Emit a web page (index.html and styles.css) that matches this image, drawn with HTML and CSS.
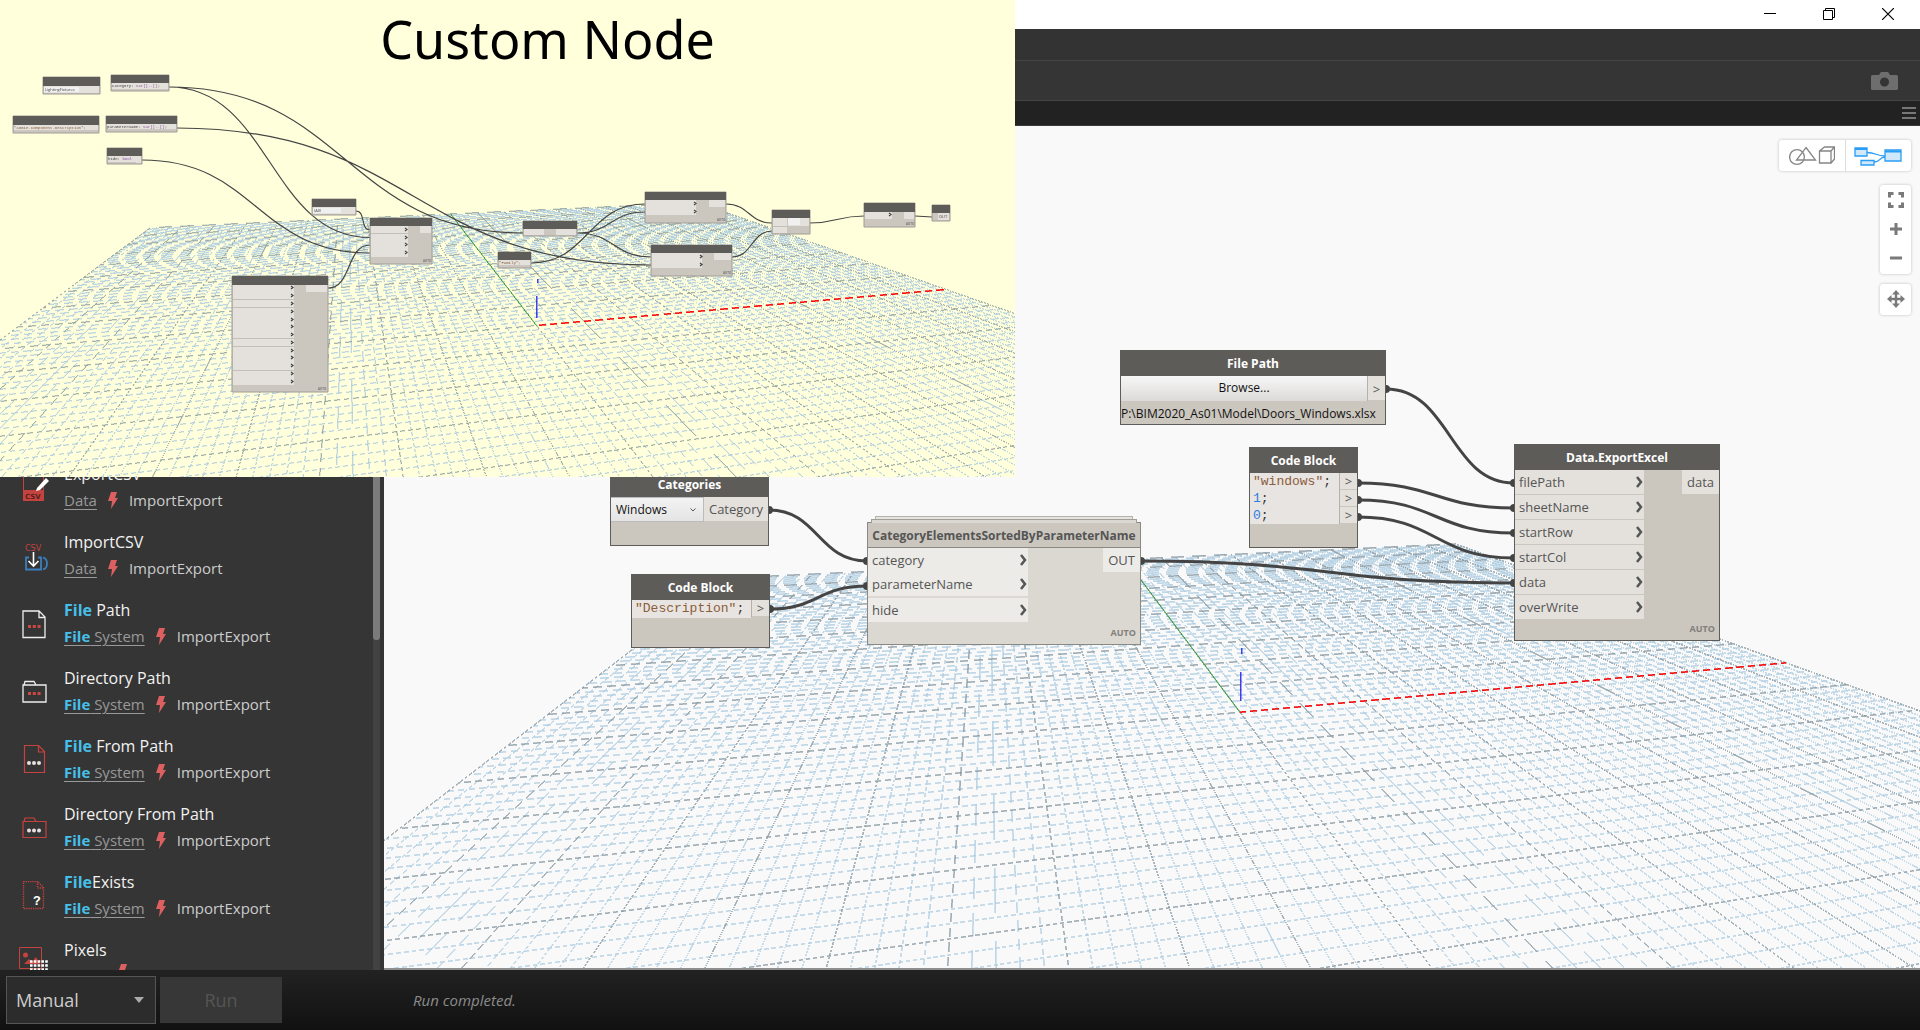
FILE: index.html
```html
<!DOCTYPE html>
<html lang="en">
<head>
<meta charset="utf-8">
<title>Dynamo</title>
<link rel="stylesheet" href="styles.css">
</head>
<body>
<div class="app">
  <header class="titlebar">
    <button class="win-btn" aria-label="Minimize"><svg width="12" height="12"><path d="M0 5.500h12" stroke="#000"/></svg></button>
    <button class="win-btn" aria-label="Restore"><svg width="12" height="12" fill="none" stroke="#000"><path d="M.5 2.500h9v9h-9zM2.500 2.500v-2h9v9h-2"/></svg></button>
    <button class="win-btn" aria-label="Close"><svg width="12" height="12"><path d="M0 0l12 12M12 0L0 12" stroke="#000" stroke-width="1.200"/></svg></button>
  </header>
  <div class="menubar"></div>
  <div class="toolbar">
    <button class="plain" aria-label="Export image"><svg width="27" height="18" viewBox="0 0 27 18"><path fill="#6e6e6e" fill-rule="evenodd" d="M1.500 3H8l1.500-2.500Q9.800 0 10.500 0h6q.7 0 1 .5L19 3h6.500Q27 3 27 4.500v12q0 1.500-1.500 1.500h-24Q0 18 0 16.500v-12Q0 3 1.500 3zM13.500 5.500a4.500 4.500 0 1 0 .01 0z"/></svg></button>
  </div>

  <div class="main">
    <aside class="sidebar">
      <ul class="results">
        <li class="result">
          <svg class="icon" width="32" height="32" viewBox="0 0 32 32" overflow="visible"><path d="M4.500 20V-3h14l6 6v17" fill="none" stroke="#c5433f"/><path d="M18.500-3v6h6" fill="none" stroke="#c5433f"/><path d="M4 17h21v11H4z" fill="#c5433f"/><text x="6" y="26" class="csv dark">CSV</text><path d="M18 15l9-10 3 3-9 9-4 1z" fill="#fff"/></svg>
          <div class="info"><h3>ExportCSV</h3><p><a href="#">Data</a><svg class="bolt" width="10" height="17"><path d="M3 0h6L7 6h3L3 17 4 9H0z"/></svg>ImportExport</p></div>
        </li>
        <li class="result">
          <svg class="icon" width="32" height="32" viewBox="0 0 32 32"><text x="6" y="10" class="csv">CSV</text><path d="M10 16.500H7v12h15v-12h-3M24 16.500q4 1 4 6t-4 6" fill="none" stroke="#3c7fbd" stroke-width="1.800"/><path d="M14.500 11v13M9.500 20l5 5 5-5" fill="none" stroke="#fff" stroke-width="1.600"/></svg>
          <div class="info"><h3>ImportCSV</h3><p><a href="#">Data</a><svg class="bolt" width="10" height="17"><path d="M3 0h6L7 6h3L3 17 4 9H0z"/></svg>ImportExport</p></div>
        </li>
        <li class="result">
          <svg class="icon" width="32" height="32" viewBox="0 0 32 32"><path d="M4 2h16l6 6v20.500H4zM20 2v6.500h6" fill="none" stroke="#eee" stroke-width="1.300"/><path d="M9 17.500h3M13.800 17.500h3M18.600 17.500h3" stroke="#c94a45" stroke-width="3"/></svg>
          <div class="info"><h3><b>File</b> Path</h3><p><a href="#"><b>File</b> System</a><svg class="bolt" width="10" height="17"><path d="M3 0h6L7 6h3L3 17 4 9H0z"/></svg>ImportExport</p></div>
        </li>
        <li class="result">
          <svg class="icon" width="32" height="32" viewBox="0 0 32 32"><path d="M4 8h23v17H4zM5 8l1-3.500h9L17 8" fill="none" stroke="#eee" stroke-width="1.300"/><path d="M9 16.500h3M13.800 16.500h3M18.600 16.500h3" stroke="#c94a45" stroke-width="3"/></svg>
          <div class="info"><h3>Directory Path</h3><p><a href="#"><b>File</b> System</a><svg class="bolt" width="10" height="17"><path d="M3 0h6L7 6h3L3 17 4 9H0z"/></svg>ImportExport</p></div>
        </li>
        <li class="result">
          <svg class="icon" width="32" height="32" viewBox="0 0 32 32"><path d="M5.500.5h14l6 6v21h-20zM19.500.5v6.500h6" fill="none" stroke="#c5433f" stroke-width="1.200"/><g fill="#e8e0e0"><circle cx="10" cy="18" r="2"/><circle cx="15" cy="18" r="2"/><circle cx="20" cy="18" r="2"/></g></svg>
          <div class="info"><h3><b>File</b> From Path</h3><p><a href="#"><b>File</b> System</a><svg class="bolt" width="10" height="17"><path d="M3 0h6L7 6h3L3 17 4 9H0z"/></svg>ImportExport</p></div>
        </li>
        <li class="result">
          <svg class="icon" width="32" height="32" viewBox="0 0 32 32"><path d="M4 8.500h23v16H4zM5 8.500l1-3.500h9l2 3.500" fill="none" stroke="#c5433f" stroke-width="1.200"/><g fill="#e8e0e0"><circle cx="10" cy="17.500" r="2"/><circle cx="15" cy="17.500" r="2"/><circle cx="20" cy="17.500" r="2"/></g></svg>
          <div class="info"><h3>Directory From Path</h3><p><a href="#"><b>File</b> System</a><svg class="bolt" width="10" height="17"><path d="M3 0h6L7 6h3L3 17 4 9H0z"/></svg>ImportExport</p></div>
        </li>
        <li class="result">
          <svg class="icon" width="32" height="32" viewBox="0 0 32 32"><path d="M4.500.5h14l6 6v21h-20zM18.500.5v6.500h6" fill="none" stroke="#c5433f" stroke-width="1.400" stroke-dasharray="1.200 1"/><text x="14" y="24" class="q">?</text></svg>
          <div class="info"><h3><b>File</b>Exists</h3><p><a href="#"><b>File</b> System</a><svg class="bolt" width="10" height="17"><path d="M3 0h6L7 6h3L3 17 4 9H0z"/></svg>ImportExport</p></div>
        </li>
        <li class="result">
          <svg class="icon" width="32" height="32" viewBox="0 0 32 32" overflow="visible"><path d="M.5-1.500h22v21H.5z" fill="none" stroke="#c5433f"/><circle cx="6.500" cy="6" r="2.500" fill="#c5433f"/><path d="M5 15l5-5 3 3 4-5 4 7z" fill="#c5433f"/><path d="M11 12.500h18M11 16.500h18M11 20.500h18" stroke="#fff" stroke-width="2.600" stroke-dasharray="2.600 1.200"/></svg>
          <div class="info"><h3>Pixels</h3><p><span class="spacer"></span><svg class="bolt" width="10" height="17"><path d="M3 0h6L7 6h3L3 17 4 9H0z"/></svg></p></div>
        </li>
      </ul>
      <div class="track"><div class="thumb"></div></div>
    </aside>

    <section class="workspace">
      <div class="tabs"><button class="plain" aria-label="Tabs menu"><svg width="14" height="14"><path d="M0 2h14M0 7h14M0 12h14" stroke="#777" stroke-width="2"/></svg></button></div>
      <div class="graph">
        <canvas class="grid" id="grid"></canvas>
        <svg class="wires" aria-hidden="true">
          <g transform="translate(-384 -126)">
            <path d="M769 510C818 510 818 561 867 561"/>
            <path d="M770 609C818 609 818 586 867 586"/>
            <path d="M1386 389C1450 389 1450 483 1514 483"/>
            <path d="M1358 483C1436 483 1436 508 1514 508"/>
            <path d="M1358 500C1436 500 1436 533 1514 533"/>
            <path d="M1358 517C1436 517 1436 558 1514 558"/>
            <path d="M1141 561C1328 561 1328 583 1514 583"/>
            <g class="dots"><circle cx="769" cy="510" r="4"/><circle cx="867" cy="561" r="4"/><circle cx="770" cy="609" r="4"/><circle cx="867" cy="586" r="4"/><circle cx="1386" cy="389" r="4"/><circle cx="1514" cy="483" r="4"/><circle cx="1358" cy="483" r="4"/><circle cx="1514" cy="508" r="4"/><circle cx="1358" cy="500" r="4"/><circle cx="1514" cy="533" r="4"/><circle cx="1358" cy="517" r="4"/><circle cx="1514" cy="558" r="4"/><circle cx="1141" cy="561" r="4"/><circle cx="1514" cy="583" r="4"/></g>
          </g>
        </svg>

        <article class="node categories">
          <h2>Categories</h2>
          <div class="row"><span class="picker"><select aria-label="Category"><option>Windows</option></select><svg width="6" height="4"><path d="M.5.5l2.500 2.500L5.500.5" fill="none" stroke="#555"/></svg></span><span class="out">Category</span></div>
        </article>

        <article class="node description">
          <h2>Code Block</h2>
          <div class="row"><pre><i>"Description"</i>;</pre><div class="ports"><span>&gt;</span></div></div>
        </article>

        <article class="node custom">
          <h2>CategoryElementsSortedByParameterName</h2>
          <div class="row">
            <ul class="ins"><li>category<svg class="chev" width="7" height="12"><path d="M1 1l4 5-4 5"/></svg></li><li class="cut">parameterName<svg class="chev" width="7" height="12"><path d="M1 1l4 5-4 5"/></svg></li><li>hide<svg class="chev" width="7" height="12"><path d="M1 1l4 5-4 5"/></svg></li></ul>
            <span class="out">OUT</span>
          </div>
          <footer>AUTO</footer>
        </article>

        <article class="node filepath">
          <h2>File Path</h2>
          <div class="row"><button class="browse">Browse...</button><div class="ports"><span>&gt;</span></div></div>
          <p>P:\BIM2020_As01\Model\Doors_Windows.xlsx</p>
        </article>

        <article class="node values">
          <h2>Code Block</h2>
          <div class="row"><pre><i>"windows"</i>;
<b>1</b>;
<b>0</b>;</pre><div class="ports"><span>&gt;</span><span>&gt;</span><span>&gt;</span></div></div>
        </article>

        <article class="node export">
          <h2>Data.ExportExcel</h2>
          <div class="row">
            <ul class="ins"><li>filePath<svg class="chev" width="7" height="12"><path d="M1 1l4 5-4 5"/></svg></li><li>sheetName<svg class="chev" width="7" height="12"><path d="M1 1l4 5-4 5"/></svg></li><li>startRow<svg class="chev" width="7" height="12"><path d="M1 1l4 5-4 5"/></svg></li><li>startCol<svg class="chev" width="7" height="12"><path d="M1 1l4 5-4 5"/></svg></li><li>data<svg class="chev" width="7" height="12"><path d="M1 1l4 5-4 5"/></svg></li><li>overWrite<svg class="chev" width="7" height="12"><path d="M1 1l4 5-4 5"/></svg></li></ul>
            <span class="out">data</span>
          </div>
          <footer>AUTO</footer>
        </article>

        <div class="controls">
          <div class="card views">
            <button aria-label="3D preview"><svg width="46" height="20" fill="none" stroke="#858585" stroke-width="1.300"><circle cx="8" cy="11" r="7.400"/><path d="M17 1.500L26.500 14H7.500zM30.500 5h11.500v12H30.500zM30.500 5l5-4H45.500v12L42 17M42 5l3.500-4"/></svg></button>
            <button aria-label="Graph view"><svg width="48" height="20" fill="#cfe8fb" stroke="#2b9df4" stroke-width="1.300"><path fill="none" d="M13 6.500C22 6.500 22 10 31 10M20 16C27 16 25 11 31 11"/><path d="M1 2h12v8H1zM31 4h16v11H31zM7 14.500h13V19H7z"/><path stroke-width="2" d="M1 3h12M31 5.500h16"/></svg></button>
          </div>
          <div class="card zoom">
            <button aria-label="Zoom to fit"><svg width="16" height="16" fill="none" stroke="#7a7a7a" stroke-width="3"><path d="M1.500 5.500v-4h4M10.500 1.500h4v4M14.500 10.500v4h-4M5.500 14.500h-4v-4"/></svg></button>
            <button aria-label="Zoom in"><svg width="14" height="14" stroke="#7a7a7a" stroke-width="3"><path d="M1 7h12M7 1v12"/></svg></button>
            <button aria-label="Zoom out"><svg width="14" height="14" stroke="#7a7a7a" stroke-width="3"><path d="M1 7h12"/></svg></button>
          </div>
          <div class="card pan">
            <button aria-label="Pan"><svg width="18" height="18"><path d="M3 9h12M9 3v12" stroke="#7a7a7a" stroke-width="2.400"/><path d="M9 0l4 4.500H5zM9 18l4-4.500H5zM0 9l4.500-4v8zM18 9l-4.500-4v8z" fill="#7a7a7a"/></svg></button>
          </div>
        </div>
      </div>
    </section>
  </div>

  <footer class="runbar">
    <span class="mode"><select aria-label="Run mode"><option>Manual</option></select><svg width="10" height="6"><path d="M0 0h10L5 6z" fill="#aaa"/></svg></span>
    <button class="run" disabled>Run</button>
    <span class="status">Run completed.</span>
  </footer>
</div>

<section class="inset">
  <canvas class="grid" id="inset-grid"></canvas>
  <h1>Custom Node</h1>
  <svg class="mini" width="1015" height="477" aria-hidden="true">
    <g class="mwires">
      <path d="M169 87C270 87 270 237.500 370 237.500M169 87C346 87 346 233 523 233M177 128C414 128 414 265 651 265M142 160C256 160 256 253 370 253M356 211C366 211 360 230 370 230M328 288C352 288 346 245 370 245"/>
      <path d="M577 233C611 233 611 212 645 212M577 233C614 233 614 257 651 257M531 263C588 263 588 204 645 204M726 204C749 204 749 223 772 223M732 257C752 257 752 231 772 231M810 223C837 223 837 216 864 216M915 216L932 217"/>
    </g>
    <g class="body"><path d="M43 77h57v17H43zM111 75h58v16h-58zM13 116h86v17H13zM106 116h71v16h-71zM107 148h35v16h-35zM312 199h44v16h-44zM370 218h62v46h-62zM232 276h96v116h-96zM523 221h54v15h-54zM498 252h33v16h-33zM645 192h81v31h-81zM651 245h81v31h-81zM772 210h38v24h-38zM864 203h51v24h-51zM932 205h18v16h-18z"/></g>
    <g class="cells"><path d="M44 86h35v7H44zM79 86h20v7H79zM112 83h51v6h-51zM163 83h5v6h-5zM14 125h84v5H14zM107 124h69v5h-69zM108 156h28v6h-28zM136 156h5v7h-5zM313 207h42v7h-42zM371 226h37v31h-37zM420 226h11v7h-11zM233 285h61v100h-61zM306 285h21v7h-21zM524 229h20v6h-20zM556 229h20v6h-20zM499 260h31v5h-31zM646 200h50v15h-50zM709 200h16v7h-16zM652 253h50v15h-50zM714 253h17v7h-17zM773 218h14v15h-14zM788 218h21v8h-21zM865 212h27v7h-27zM904 212h10v7h-10zM938 213h11v7h-11z"/></g>
    <g class="head"><path d="M43 77h57v9H43zM111 75h58v8h-58zM13 116h86v9H13zM106 116h71v8h-71zM107 148h35v8h-35zM312 199h44v8h-44zM370 218h62v8h-62zM232 276h96v9h-96zM523 221h54v8h-54zM498 252h33v8h-33zM645 192h81v8h-81zM651 245h81v8h-81zM772 210h38v8h-38zM864 203h51v9h-51zM932 205h18v8h-18z"/></g>
    <path class="lines" d="M371 233.500h37M233 299.500h61M233 307.500h61M233 338.500h61M233 346.500h61M233 370.500h61M773 226.500h14"/>
    <path class="light" d="M44 87h35v5H44zM313 208h28v5h-28zM788 218h12v7h-12z"/>
    <path class="marks" d="M405 228l2 1.500-2 1.500M405 236l2 1.500-2 1.500M405 243l2 1.500-2 1.500M405 251l2 1.500-2 1.500M291 286l2 1.500-2 1.500M291 294l2 1.500-2 1.500M291 302l2 1.500-2 1.500M291 310l2 1.500-2 1.500M291 318l2 1.500-2 1.500M291 325l2 1.500-2 1.500M291 333l2 1.500-2 1.500M291 341l2 1.500-2 1.500M291 349l2 1.500-2 1.500M291 356l2 1.500-2 1.500M291 364l2 1.500-2 1.500M291 372l2 1.500-2 1.500M291 380l2 1.500-2 1.500M694 202l2 1.500-2 1.500M694 210l2 1.500-2 1.500M700 255l2 1.500-2 1.500M700 263l2 1.500-2 1.500M889 213l2 1.500-2 1.500"/>
    <g class="tiny">
      <text x="45" y="91">LightingFixtures</text><text x="314" y="212">(All)</text><text x="939" y="218">OUT</text>
      <text x="423" y="262" class="auto">AUTO</text><text x="318" y="390" class="auto">AUTO</text><text x="717" y="221" class="auto">AUTO</text><text x="723" y="274" class="auto">AUTO</text><text x="906" y="225" class="auto">AUTO</text>
    </g>
    <g class="tiny mono"><text x="112" y="87">category: <tspan>var[]..[]</tspan>;</text><text x="14" y="129" class="str">"COBie.Component.Description";</text><text x="107" y="128">parameterName: <tspan>var[]..[]</tspan>;</text><text x="108" y="160">hide: <tspan>bool</tspan></text><text x="499" y="264" class="str">"Family";</text></g>
  </svg>
</section>
<script src="grid.js"></script>
</body>
</html>
```
FILE: styles.css
```css
* { box-sizing: border-box; }
body { margin: 0; font-family: "Open Sans", "Noto Sans", sans-serif; overflow: hidden; }
h1, h2, h3, p, ul, pre { margin: 0; padding: 0; font-weight: normal; list-style: none; }
button, select { font: inherit; border: 0; padding: 0; margin: 0; background: none; color: inherit; }
svg { display: block; flex: none; }

.app { height: 100vh; display: flex; flex-direction: column; background: #353535; }
.titlebar { height: 29px; flex: none; background: #fff; display: flex; justify-content: flex-end; padding-right: 3px; }
.win-btn { width: 59px; height: 28px; display: grid; place-items: center; }
.menubar { height: 32px; flex: none; background: #333; border-bottom: 1px solid #444; }
.toolbar { height: 40px; flex: none; background: #353535; border-bottom: 1px solid #444; display: flex; justify-content: flex-end; align-items: center; padding-right: 22px; }
.main { flex: 1; min-height: 0; display: flex; }

.sidebar { width: 384px; flex: none; display: flex; overflow: hidden; padding-right: 4px; }
.results { flex: 1; padding-top: 356px; }
.result { height: 68px; display: flex; padding: 5px 0 0 19px; gap: 13px; }
.icon { margin-top: 11px; }
.csv { font: 8px "DejaVu Sans", sans-serif; fill: #c5433f; }
.csv.dark { fill: #5a1f1d; font-weight: bold; font-size: 7px; }
.q { font: bold 13px "Liberation Mono", monospace; fill: #fff; }
.info { display: flex; flex-direction: column; gap: 2px; }
.info h3 { font-size: 16px; line-height: 24px; color: #f2f2f2; }
.info p { font-size: 15px; line-height: 24px; color: #ccc; display: flex; align-items: center; gap: 11px; }
.info a { color: #999; text-underline-offset: 3px; }
.info b { color: #46c0ea; font-weight: 700; }
.bolt { fill: #dc6060; }
.spacer { width: 43px; }
.track { width: 7px; background: #424242; }
.thumb { height: 539px; background: #7b7b7b; border-radius: 0 0 3px 3px; }

.workspace { flex: 1; min-width: 0; display: flex; flex-direction: column; }
.tabs { height: 25px; flex: none; background: #222; border-bottom: 1px solid #3a3a3a; display: flex; justify-content: flex-end; align-items: center; padding-right: 4px; }
.graph { flex: 1; min-height: 0; position: relative; overflow: hidden; background: #f9f9f9; border-bottom: 2px solid #8f8f8f; }
.grid { position: absolute; inset: 0; width: 100%; height: 100%; }
.wires { position: absolute; inset: 0; width: 100%; height: 100%; fill: none; stroke: #444; stroke-width: 3; }
.dots { fill: #444; stroke: none; }

.node { position: absolute; background: #cbc6be; border: 1px solid #5e5c59; font-size: 13px; color: #555; }
.node h2 { height: 25px; line-height: 26px; background: #5e5c59; color: #fff; font-size: 12px; font-weight: 700; text-align: center; }
.node .row { display: flex; align-items: flex-start; }
.out { margin-left: auto; height: 24px; line-height: 24px; padding: 0 5px; background: #e4e1dc; }
.ins { background: inherit; }
.ins li { height: 24px; line-height: 24px; margin-bottom: 1px; padding: 0 1px 0 4px; background: #e4e1dc; display: flex; justify-content: space-between; align-items: center; }
.chev { fill: none; stroke: #555; stroke-width: 2.500px; }
.node footer { position: absolute; right: 4px; bottom: 4px; font-size: 9px; line-height: 14px; font-weight: 700; color: #82807b; }
.node pre { flex: 1; font: 13px/18px "Liberation Mono", monospace; background: #e8e4e1; padding-left: 3px; color: #333; }
.node pre i { font-style: normal; color: #8b5d3b; }
.node pre b { font-weight: normal; color: #2e7de0; }
.ports { width: 18px; border-left: 1px solid #b5b0a9; }
.ports span { display: block; height: 16px; line-height: 16px; margin-bottom: 1px; text-align: center; background: #e4e1dc; }

.categories { left: 226px; top: 345px; width: 159px; height: 75px; }
.picker { width: 95px; height: 25px; display: grid; align-items: center; background: linear-gradient(#f3f3f3, #e4e4e4); border: 1px solid #bbb; border-left: 0; }
.picker select, .picker svg, .mode select, .mode svg { grid-area: 1 / 1; }
.picker select { appearance: none; font-size: 12px; color: #111; padding-left: 5px; }
.picker svg { justify-self: end; margin-right: 7px; pointer-events: none; }
.description { left: 247px; top: 448px; width: 139px; height: 74px; }
.custom { left: 483px; top: 396px; width: 274px; height: 123px; background: #dad8d0; border-color: #8a8882; }
.custom::before { content: ""; position: absolute; left: 7px; right: 7px; top: -7px; height: 3px; border: 1px solid #b4b2ac; border-bottom: 0; background: #e6e4df; }
.custom::after { content: ""; position: absolute; left: 3px; right: 3px; top: -4px; height: 3px; border: 1px solid #a19f99; border-bottom: 0; background: #dad8d0; }
.custom h2 { background: #cbc6be; color: #555; border-bottom: 1px solid #8a8882; }
.custom .ins { width: 160px; }
.custom .ins li { background: #ecebe7; margin: 0; }
.custom .ins .cut { margin-bottom: 2px; }
.custom .out { background: #ecebe7; }
.filepath { left: 736px; top: 224px; width: 266px; height: 75px; }
.browse { flex: 1; height: 25px; padding-bottom: 2px; background: linear-gradient(#f7f7f7, #dcdad8); color: #111; font-size: 12px; }
.filepath .ports span { height: 24px; line-height: 26px; }
.filepath p { font-size: 12px; line-height: 26px; height: 23px; color: #111; white-space: nowrap; }
.values { left: 865px; top: 321px; width: 109px; height: 101px; }
.values pre { line-height: 17px; }
.export { left: 1130px; top: 318px; width: 206px; height: 197px; }
.export .ins { width: 129px; }

.controls { position: absolute; right: 9px; top: 14px; display: flex; flex-direction: column; align-items: flex-end; }
.card { background: #fff; border-radius: 3px; box-shadow: 0 0 3px #bbb; display: flex; }
.card button { display: grid; place-items: center; }
.views { width: 132px; height: 31px; }
.views button { flex: 1; }
.views button + button { border-left: 1px solid #ddd; }
.zoom { width: 31px; flex-direction: column; margin-top: 14px; padding-bottom: 2px; }
.zoom button { height: 29px; }
.pan { width: 31px; height: 31px; margin-top: 10px; }
.pan button { flex: 1; padding-bottom: 1px; }

.runbar { height: 60px; flex: none; background: linear-gradient(#222, #111); display: flex; align-items: center; padding-left: 6px; font-size: 18px; }
.mode { width: 150px; height: 48px; display: grid; align-items: center; background: #2c2c2c; border: 1px solid #555; color: #ccc; }
.mode select { appearance: none; height: 46px; padding-left: 9px; }
.mode svg { justify-self: end; margin-right: 11px; pointer-events: none; }
.run { width: 122px; height: 46px; margin-left: 4px; background: #373737; color: #555; }
.status { margin-left: 131px; font-size: 15px; font-style: italic; color: #8c8c8c; }

.inset { position: absolute; left: 0; top: 0; width: 1015px; height: 477px; background: #ffffdc; overflow: hidden; }
.inset h1 { position: absolute; left: 0; right: 0; top: 4px; padding-left: 80px; text-align: center; font: 52px/70px "Noto Sans", sans-serif; color: #000; }
.mini { position: absolute; left: 0; top: 0; }
.mwires { fill: none; stroke: #444; stroke-width: 1.200px; }
.body { fill: #cbc6be; stroke: #a09c96; }
.cells { fill: #e4e1dc; }
.head { fill: #5e5c59; }
.lines { stroke: #c4bfb7; }
.light { fill: #f0f0f0; }
.marks { fill: none; stroke: #444; stroke-width: 1.200px; }
.tiny { font: 4px "Open Sans", sans-serif; fill: #444; }
.tiny tspan { fill: #8a55a0; }
.tiny .auto { font-size: 3px; font-weight: bold; fill: #777; }
.mono { font: 4px "Liberation Mono", monospace; }
.mono .str { fill: #8b5d3b; }
```
FILE: grid.js
```js
// Ground plane: 200 x 200 units, a line every 2 units, a dark one every 10.
function project(s, t) {
  const w = 1 + 0.1769 * s + 0.8324 * t;
  return [(1239.5 + 862 * s + 822 * t) / w, (711.7 + 67.8 * s + 312.5 * t) / w];
}

function drawScene(canvas, toLocal, colors, soft, axes) {
  const width = canvas.width = canvas.clientWidth;
  const height = canvas.height = canvas.clientHeight;
  const ctx = canvas.getContext('2d');

  // Unsmoothed line: it shows only where it runs between two pixel rows,
  // which breaks it into short two-row dashes.
  function thin(a, b, color, reach, strong, weak) {
    let [x0, y0] = toLocal(...a), [x1, y1] = toLocal(...b);
    ctx.fillStyle = color;
    const flat = Math.abs(x1 - x0) > Math.abs(y1 - y0);
    if (!flat) { [x0, y0, x1, y1] = [y0, x0, y1, x1]; }
    if (x0 > x1) { [x0, y0, x1, y1] = [x1, y1, x0, y0]; }
    const slope = (y1 - y0) / (x1 - x0);
    const limit = flat ? width : height;
    const dot = (x, y, alpha) => {
      ctx.globalAlpha = alpha;
      if (flat) ctx.fillRect(x, y, 1, 1); else ctx.fillRect(y, x, 1, 1);
    };
    for (let x = Math.max(0, Math.ceil(x0)); x <= Math.min(limit, x1); x++) {
      const y = y0 + slope * (x - x0);
      const row = Math.floor(y);
      const f = y - row;
      if (Math.abs(f - 0.5) > reach) continue;
      dot(x, row, f < 0.5 ? strong : weak);
      dot(x, row + 1, f < 0.5 ? weak : strong);
    }
  }

  for (const major of [false, true]) {
    const color = major ? colors.major : colors.minor;
    for (let i = -50; i <= 50; i++) {
      if ((i % 5 === 0) !== major) continue;
      const k = i / 50;
      thin(project(-1, k), project(1, k), color, 0.31, 0.75, soft);
      thin(project(k, -0.75), project(k, 1), color, 0.31, 0.75, soft);
    }
  }
  thin(project(0, 0), project(1, 0), '#ff1010', 0.32, 1, 0.6);
  thin(project(0, 0), project(0, 1), '#35a035', 0.5, 0.8, 0.2);
  ctx.globalAlpha = 0.85;
  ctx.fillStyle = '#2020f0';
  for (const [x, y, h] of axes) ctx.fillRect(x, y, 1.5, h);
}

function render() {
  drawScene(document.getElementById('grid'), (x, y) => [x - 384, y - 126],
    { minor: '#abcbe0', major: '#84969f' }, 0.5, [[856, 546, 29], [857, 522, 6]]);
  drawScene(document.getElementById('inset-grid'),
    (x, y) => [536 + 0.75 * (x - 1239.5), 325 + 0.73 * (y - 711.7)],
    { minor: '#a8c9df', major: '#8a9c9c' }, 0.25, [[536, 296, 22], [537, 279, 4]]);
}
render();
window.addEventListener('resize', render);
```
